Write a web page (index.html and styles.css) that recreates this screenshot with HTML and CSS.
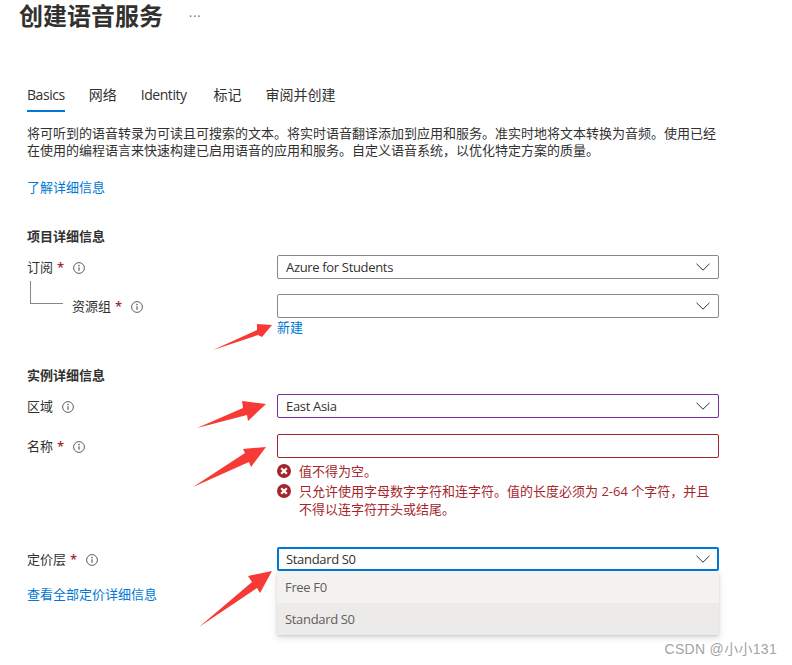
FILE: index.html
```html
<!DOCTYPE html>
<html lang="zh-CN">
<head>
<meta charset="utf-8">
<title>创建语音服务</title>
<link rel="stylesheet" href="styles.css">
</head>
<body>
<svg width="0" height="0" class="defs">
  <defs>
    <symbol id="info" viewBox="0 0 12 12">
      <circle cx="6" cy="6" r="5.4" fill="none" stroke="#605e5c" stroke-width="1"/>
      <circle cx="6" cy="3.6" r=".8" fill="#605e5c"/>
      <path d="M6 5.2v3.6" stroke="#605e5c" stroke-width="1.2" fill="none"/>
    </symbol>
    <symbol id="chev" viewBox="0 0 14 8">
      <path d="M.5.8 7 7.2 13.5.8" fill="none" stroke="#323130" stroke-width="1"/>
    </symbol>
    <symbol id="err" viewBox="0 0 14 14">
      <circle cx="7" cy="7" r="7" fill="#a4262c"/>
      <path d="M4.2 4.2l5.6 5.6M9.8 4.2l-5.6 5.6" stroke="#fff" stroke-width="2.2" fill="none"/>
    </symbol>
  </defs>
</svg>
<main class="page">
  <header class="title-row">
    <h1 class="title">创建语音服务</h1>
    <span class="more">···</span>
  </header>
  <nav class="tabs">
    <span class="tab tab-latin tab-active">Basics</span>
    <span class="tab">网络</span>
    <span class="tab tab-latin tab-wide">Identity</span>
    <span class="tab">标记</span>
    <span class="tab">审阅并创建</span>
  </nav>
  <p class="intro">将可听到的语音转录为可读且可搜索的文本。将实时语音翻译添加到应用和服务。准实时地将文本转换为音频。使用已经<br>在使用的编程语言来快速构建已启用语音的应用和服务。自定义语音系统，以优化特定方案的质量。</p>
  <a class="link learn">了解详细信息</a>

  <h2 class="section sec-project">项目详细信息</h2>
  <div class="row row-sub">
    <div class="label">订阅<span class="req">*</span><svg class="info"><use href="#info"/></svg></div>
    <div class="select"><span>Azure for Students</span><svg class="chev"><use href="#chev"/></svg></div>
  </div>
  <div class="row row-rg">
    <div class="label label-nested"><span class="tree"></span>资源组<span class="req">*</span><svg class="info"><use href="#info"/></svg></div>
    <div class="control">
      <div class="select"><span></span><svg class="chev"><use href="#chev"/></svg></div>
      <a class="link new">新建</a>
    </div>
  </div>

  <h2 class="section sec-instance">实例详细信息</h2>
  <div class="row row-region">
    <div class="label">区域<svg class="info"><use href="#info"/></svg></div>
    <div class="select select-purple"><span>East Asia</span><svg class="chev"><use href="#chev"/></svg></div>
  </div>
  <div class="row row-name">
    <div class="label">名称<span class="req">*</span><svg class="info"><use href="#info"/></svg></div>
    <div class="control">
      <div class="select select-red"></div>
      <div class="error err-first"><svg class="err"><use href="#err"/></svg><span>值不得为空。</span></div>
      <div class="error"><svg class="err"><use href="#err"/></svg><span>只允许使用字母数字字符和连字符。值的长度必须为 2-64 个字符，并且<br>不得以连字符开头或结尾。</span></div>
    </div>
  </div>
  <div class="row row-price">
    <div class="label-col">
      <div class="label">定价层<span class="req">*</span><svg class="info"><use href="#info"/></svg></div>
      <a class="link price-link">查看全部定价详细信息</a>
    </div>
    <div class="control">
      <div class="select select-blue"><span>Standard S0</span><svg class="chev"><use href="#chev"/></svg></div>
      <ul class="menu">
        <li class="opt">Free F0</li>
        <li class="opt opt-sel">Standard S0</li>
      </ul>
    </div>
  </div>
</main>

<svg class="arrows" width="792" height="665" viewBox="0 0 792 665">
  <path d="M213 350 257 330 257 324 272 325 262 337 258 335Z"/>
  <path d="M197 428 243 408 242 401 266 404 248 421 247 415Z"/>
  <path d="M193 487 245 453 243 449 266 447 251 467 249 462Z"/>
  <path d="M199 627 252 582 248 576 272 571 260 593 257 588Z"/>
</svg>
<div class="watermark">CSDN @小小131</div>
</body>
</html>
```

FILE: styles.css
```css
* { box-sizing: border-box; }
html, body { margin: 0; padding: 0; background: #fff; }
body {
  width: 792px;
  height: 665px;
  overflow: hidden;
  position: relative;
  font-family: "Open Sans", "Noto Sans CJK SC", sans-serif;
  font-size: 13px;
  line-height: 18px;
  color: #323130;
}
.defs { position: absolute; }
.page { padding: 0 73px 0 27px; }

.title-row { display: flex; align-items: center; height: 31px; margin-left: -8px; }
.title { margin: 0; font-size: 24px; line-height: 31px; font-weight: 700; color: #323130; }
.more { margin-left: 26px; padding-top: 3px; font-size: 12px; line-height: 28px; color: #605e5c; letter-spacing: 1px; }

.tabs { display: flex; margin-top: 52px; height: 29px; }
.tab { font-size: 14px; line-height: 24px; margin-right: 24px; height: 29px; }
.tab-latin { letter-spacing: -.45px; }
.tab-wide { margin-right: 27px; }
.tab-active { border-bottom: 2px solid #0078d4; }

.intro { margin: 13px 0 0; line-height: 17px; width: 700px; }
.link { color: #0078d4; display: block; line-height: 18px; }
.learn { margin-top: 19px; }

.section { margin: 0; font-size: 13px; line-height: 18px; font-weight: 700; }
.sec-project { margin-top: 31px; }
.sec-instance { margin-top: 30px; }

.row { display: grid; grid-template-columns: 250px 442px; }
.row-sub { margin-top: 10px; }
.row-rg { margin-top: 15px; }
.row-region { margin-top: 10px; }
.row-name { margin-top: 16px; }
.row-price { margin-top: 29px; }

.label { display: flex; align-items: center; height: 24px; position: relative; }
.label-nested { padding-left: 45px; }
.tree {
  position: absolute;
  left: 3px;
  top: -13px;
  width: 33px;
  height: 23px;
  border-left: 1px solid #8a8886;
  border-bottom: 1px solid #8a8886;
}
.req { color: #a4262c; margin-left: 4px; font-weight: 600; }
.info { width: 12px; height: 12px; margin: 2px 0 0 9px; }

.select {
  display: flex;
  align-items: center;
  justify-content: space-between;
  height: 24px;
  padding: 0 8px;
  border: 1px solid #8a8886;
  border-radius: 2px;
  background: #fff;
  letter-spacing: -.33px;
}
.select-purple { border-color: #7b2d9c; }
.select-red { border-color: #a4262c; }
.select-blue { border: 2px solid #0078d4; padding: 0 7px; }
.chev { width: 14px; height: 8px; flex: none; }

.new { margin-top: 0; }
.error { display: flex; color: #a4262c; line-height: 18px; margin-top: 2px; }
.err-first { margin-top: 4px; }
.err { width: 14px; height: 14px; flex: none; margin: 2px 8px 0 0; }

.price-link { margin-top: 14px; }
.menu {
  list-style: none;
  margin: 0;
  padding: 0;
  box-shadow: 0 3px 7px rgba(0,0,0,.13), 0 1px 2px rgba(0,0,0,.11);
}
.opt { height: 32px; line-height: 32px; padding-left: 8px; background: #f3f2f1; color: #605e5c; letter-spacing: -.33px; }
.opt-sel { background: #edebe9; }

.arrows { position: absolute; left: 0; top: 0; }
.arrows path { fill: #f73a35; }
.watermark {
  position: absolute;
  right: 15px;
  top: 640px;
  font-family: "Liberation Sans", "Noto Sans CJK SC", sans-serif;
  font-size: 14px;
  line-height: 18px;
  letter-spacing: .3px;
  color: #a3a3a3;
}
```
